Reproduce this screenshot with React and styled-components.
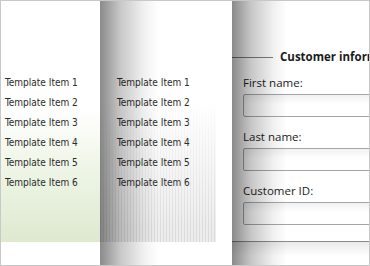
import React from "react";
import styled, { createGlobalStyle, css } from "styled-components";

const GlobalStyle = createGlobalStyle`
  html, body {
    margin: 0;
    padding: 0;
    background: #fff;
  }
`;

const Frame = styled.div`
  display: flex;
  width: 370px;
  height: 266px;
  box-sizing: border-box;
  border: 1px solid #c8c8c8;
  overflow: hidden;
  background: #fff;
`;

const Page = styled.div`
  position: relative;
  flex: ${props => (props.$width ? `0 0 ${props.$width}px` : "1 1 auto")};
  display: flex;
  flex-direction: column;
  overflow: hidden;
  ${props =>
    props.$shadow &&
    css`
      &::after {
        content: "";
        position: absolute;
        top: 0;
        bottom: 0;
        left: 0;
        width: ${props.$shadow}px;
        background: linear-gradient(
          to right,
          rgba(0, 0, 0, 0.46),
          rgba(0, 0, 0, 0.22) 35%,
          rgba(0, 0, 0, 0.06) 75%,
          rgba(0, 0, 0, 0)
        );
        pointer-events: none;
      }
    `}
`;

const TemplateBody = styled.div`
  flex: 0 0 241px;
  display: grid;
  grid-template: 1fr / 1fr;
  background: ${props =>
    props.$green
      ? "linear-gradient(to bottom, #ffffff, #eef5e6 45%, #dee9d0) left bottom / 100% 132px no-repeat, #fff"
      : "#fff"};
`;

const Stripes = styled.div`
  grid-area: 1 / 1;
  align-self: end;
  width: 116px;
  height: 142px;
  background: repeating-linear-gradient(
    to right,
    rgba(0, 0, 0, 0.14) 0 1px,
    rgba(0, 0, 0, 0.07) 1px 3px
  );
  -webkit-mask-image: linear-gradient(to bottom, transparent, #000 90%);
  mask-image: linear-gradient(to bottom, transparent, #000 90%);
`;

const ItemList = styled.ul`
  grid-area: 1 / 1;
  align-self: start;
  list-style: none;
  margin: 0;
  padding: 72px 0 0 ${props => props.$indent}px;
  position: relative;
`;

const Item = styled.li`
  height: 20px;
  line-height: 20px;
  font-family: "DejaVu Sans Condensed", "DejaVu Sans", sans-serif;
  font-size: 10px;
  color: #2b2b2b;
  white-space: nowrap;
`;

const Footer = styled.div`
  flex: 1 1 auto;
  background: ${props =>
    props.$shade ? "linear-gradient(to bottom, #e9e9e9, #fff 14px)" : "#fff"};
`;

const FormBody = styled.div`
  flex: 0 0 241px;
  box-sizing: border-box;
  padding-top: 48px;
  border-bottom: 1px solid #8a8a8a;
  font-family: "Open Sans", sans-serif;
  color: #1b1b1b;
`;

const GroupHeader = styled.div`
  display: flex;
  align-items: center;
  gap: 7px;
  height: 16px;
  margin-bottom: 10px;
  white-space: nowrap;
`;

const HeaderRule = styled.div`
  flex: 0 0 41px;
  height: 1px;
  background: #7e7e7e;
`;

const HeaderText = styled.span`
  font-size: 11.5px;
  font-weight: 700;
  line-height: 16px;
`;

const Fields = styled.div`
  display: flex;
  flex-direction: column;
  gap: 12px;
  padding-left: 11px;
`;

const Field = styled.label`
  display: flex;
  flex-direction: column;
  gap: 3px;
`;

const FieldLabel = styled.span`
  font-size: 11.5px;
  line-height: 16px;
  white-space: nowrap;
`;

const TextBox = styled.div`
  width: 200px;
  height: 23px;
  box-sizing: border-box;
  border: 1px solid #a3a5aa;
  border-radius: 2px;
  background: linear-gradient(to bottom, #f1f1f1, #fff 45%);
`;

const items = [1, 2, 3, 4, 5, 6].map(n => `Template Item ${n}`);
const fields = ["First name:", "Last name:", "Customer ID:"];

const TemplateList = ({ indent }) => (
  <ItemList $indent={indent}>
    {items.map(text => (
      <Item key={text}>{text}</Item>
    ))}
  </ItemList>
);

const App = () => (
  <>
    <GlobalStyle />
    <Frame>
      <Page $width={99}>
        <TemplateBody $green>
          <TemplateList indent={4} />
        </TemplateBody>
        <Footer />
      </Page>
      <Page $width={132} $shadow={58}>
        <TemplateBody>
          <Stripes />
          <TemplateList indent={17} />
        </TemplateBody>
        <Footer />
      </Page>
      <Page $shadow={55}>
        <FormBody>
          <GroupHeader>
            <HeaderRule />
            <HeaderText>Customer information</HeaderText>
          </GroupHeader>
          <Fields>
            {fields.map(label => (
              <Field key={label}>
                <FieldLabel>{label}</FieldLabel>
                <TextBox />
              </Field>
            ))}
          </Fields>
        </FormBody>
        <Footer $shade />
      </Page>
    </Frame>
  </>
);

export default App;
